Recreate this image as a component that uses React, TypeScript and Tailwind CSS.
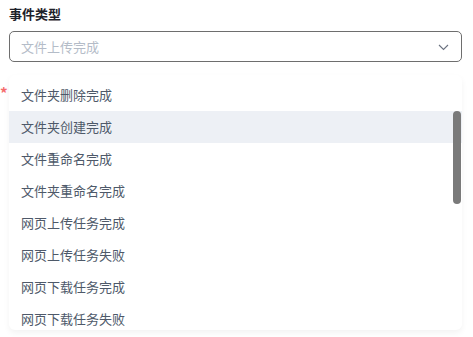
import React from 'react';

const OPTIONS = [
  '文件夹删除完成',
  '文件夹创建完成',
  '文件重命名完成',
  '文件夹重命名完成',
  '网页上传任务完成',
  '网页上传任务失败',
  '网页下载任务完成',
  '网页下载任务失败',
];

const App: React.FC = () => {
  return (
    <div className="w-[473px] h-[337px] bg-white font-['Microsoft_YaHei','Noto_Sans_CJK_SC',sans-serif] overflow-hidden">
      <div className="relative pl-[9px] pr-[11px] pt-[4px]">
        <div className="text-[13px] leading-[20px] font-bold text-[#1d2129]">事件类型</div>
        <div className="mt-[7px] h-[31px] flex items-center justify-between rounded-[5px] border border-[#6e6e6e] pl-[11px] pr-[12px]">
          <span className="text-[13px] text-[#b4bcc8]">文件上传完成</span>
          <svg width="11" height="7" viewBox="0 0 11 7" fill="none" className="mt-[1px]">
            <path d="M1 1l4.5 4.5L10 1" stroke="#6b7280" strokeWidth="1.1" />
          </svg>
        </div>

        {/* dropdown */}
        <span className="absolute left-[0px] top-[85px] text-[15px] leading-none font-bold text-[#f56c6c]">*</span>
        <div className="mt-[13px] h-[255px] rounded-[6px] bg-white shadow-[0_3px_6px_rgba(0,0,0,0.05)] relative overflow-hidden pt-[4px]">
          {OPTIONS.map((o, i) => (
            <div
              key={o}
              className={`h-[32px] flex items-center pl-[12px] text-[13px] text-[#4e5969] ${i === 1 ? 'bg-[#edf0f5]' : ''}`}
            >
              {o}
            </div>
          ))}
          <div className="absolute right-[1px] top-[36px] w-[8px] h-[93px] rounded-full bg-[#7a7a7a]" />
        </div>
      </div>
    </div>
  );
};

export default App;
